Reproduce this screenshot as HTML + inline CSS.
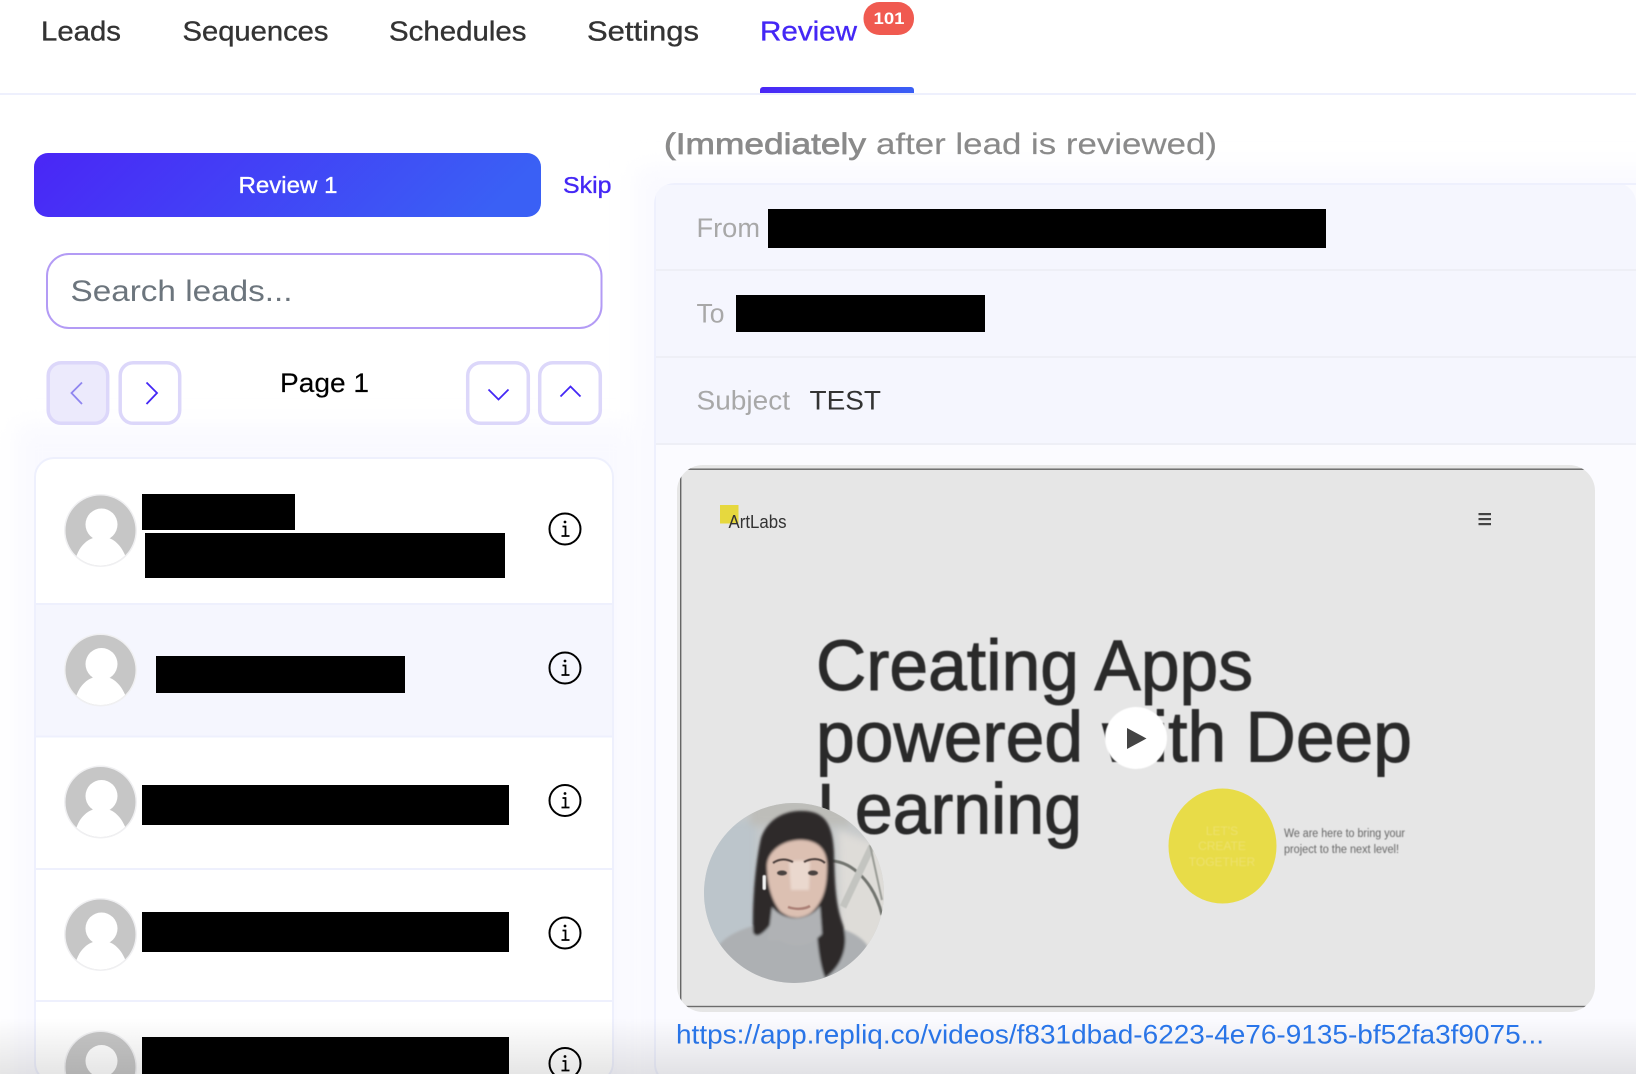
<!DOCTYPE html>
<html lang="en">
<head>
<meta charset="utf-8">
<title>Review</title>
<style>
html,body{margin:0;padding:0;background:#fff;width:1636px;height:1074px;overflow:hidden}
svg{display:block;overflow:hidden}
text{font-family:"Liberation Sans",sans-serif}
</style>
</head>
<body>
<svg width="1636" height="1074" viewBox="0 0 1636 1074" xmlns="http://www.w3.org/2000/svg">
<defs>
  <linearGradient id="grad" x1="0" y1="0" x2="1" y2="0.13"><stop offset="0" stop-color="#4a26f6"/><stop offset="1" stop-color="#3a60f5"/></linearGradient>
  <linearGradient id="grad2" x1="0" y1="0" x2="1" y2="0"><stop offset="0" stop-color="#4a26f6"/><stop offset="1" stop-color="#3a60f5"/></linearGradient>
  <linearGradient id="fade" x1="0" y1="0" x2="0" y2="1"><stop offset="0" stop-color="#000" stop-opacity="0"/><stop offset="1" stop-color="#000" stop-opacity="0.10"/></linearGradient>
  <clipPath id="avclip"><circle cx="0" cy="0" r="35"/></clipPath>
  <clipPath id="pclip"><circle cx="794" cy="893" r="90"/></clipPath>
  <clipPath id="vclip"><rect x="677" y="465" width="918" height="547" rx="26"/></clipPath>
  <clipPath id="pageclip"><rect x="654" y="183" width="982" height="891" rx="20"/></clipPath>
  <clipPath id="frame"><rect x="0" y="0" width="1636" height="1074"/></clipPath>
  <filter id="b1" x="-20%" y="-20%" width="140%" height="140%"><feGaussianBlur stdDeviation="0.6"/></filter>
  <filter id="b2" x="-20%" y="-20%" width="140%" height="140%"><feGaussianBlur stdDeviation="1.300"/></filter>
  <filter id="b3" x="-20%" y="-20%" width="140%" height="140%"><feGaussianBlur stdDeviation="4"/></filter>
  <filter id="glow" x="-10%" y="-10%" width="120%" height="120%"><feGaussianBlur stdDeviation="12"/></filter>
  <g id="av">
    <circle r="36.5" fill="#f0f0f2"/>
    <circle r="35" fill="#c6c6c6"/>
    <g clip-path="url(#avclip)">
      <path d="M-24.500 27C-21 15-12 7-2 6.500L3 6.500C13 7 21 15 25.500 27L25.500 40L-24.500 40Z" fill="#fff"/>
    </g>
    <circle cx="1" cy="-6" r="16" fill="#fff"/>
  </g>
  <g id="inf" fill="none" stroke="#000">
    <circle r="15.500" stroke-width="2"/>
    <circle cx="0" cy="-7" r="1.400" fill="#000" stroke="none"/>
    <path d="M-2.500-2.500H0.500V7M-3.500 7H4.500" stroke-width="1.800"/>
  </g>
</defs>

<rect width="1636" height="1074" fill="#fff"/>
<g clip-path="url(#frame)">
  <rect x="16" y="425" width="620" height="760" fill="#f9f9ff" filter="url(#glow)"/>
  <rect x="636" y="168" width="1100" height="1000" fill="#f9f9ff" filter="url(#glow)"/>
</g>

<!-- nav -->
<g font-size="28" fill="#333" stroke="#333" stroke-width="0.350">
  <text x="41" y="40.500" textLength="80" lengthAdjust="spacingAndGlyphs">Leads</text>
  <text x="182.500" y="40.500" textLength="146" lengthAdjust="spacingAndGlyphs">Sequences</text>
  <text x="389" y="40.500" textLength="137.500" lengthAdjust="spacingAndGlyphs">Schedules</text>
  <text x="587" y="40.500" textLength="112" lengthAdjust="spacingAndGlyphs">Settings</text>
  <text x="760" y="40.500" textLength="97" lengthAdjust="spacingAndGlyphs" fill="#4427f5" stroke="#4427f5">Review</text>
</g>
<rect x="863.500" y="2" width="50.500" height="33" rx="16" fill="#f05a50"/>
<text x="889" y="24" font-size="17" font-weight="700" fill="#fff" text-anchor="middle" textLength="31" lengthAdjust="spacingAndGlyphs">101</text>
<path d="M760 93V90a3 3 0 0 1 3-3H911a3 3 0 0 1 3 3V93Z" fill="url(#grad2)"/>
<rect x="0" y="93" width="1636" height="2" fill="#eef0fd"/>

<!-- review button -->
<rect x="34" y="153" width="507" height="64" rx="14" fill="url(#grad)"/>
<text x="238.500" y="193" font-size="23" fill="#fff" stroke="#fff" stroke-width="0.350" textLength="99" lengthAdjust="spacingAndGlyphs">Review 1</text>
<text x="563" y="193" font-size="23" fill="#4427f5" stroke="#4427f5" stroke-width="0.350" textLength="48.500" lengthAdjust="spacingAndGlyphs">Skip</text>

<!-- search -->
<rect x="47" y="254" width="554.500" height="74" rx="22" fill="#fff" stroke="#b39bf5" stroke-width="2"/>
<text x="70.500" y="301" font-size="30" fill="#6c757d" textLength="222" lengthAdjust="spacingAndGlyphs">Search leads...</text>

<!-- pager -->
<g stroke="#dcd7fa" stroke-width="3.500" fill="#fff">
  <rect x="48.200" y="362.700" width="59.500" height="60.600" rx="13" fill="#eceafc"/>
  <rect x="120.200" y="362.700" width="59.500" height="60.600" rx="13"/>
  <rect x="467.700" y="362.700" width="60.600" height="60.600" rx="13"/>
  <rect x="539.700" y="362.700" width="60.600" height="60.600" rx="13"/>
</g>
<g fill="none" stroke-width="1.800">
  <path d="M82 382.500L71.500 393L82 404" stroke="#8f86f0"/>
  <path d="M146.500 382.500L157 393L146.500 404" stroke="#4427f5"/>
  <path d="M488.500 389.500L498.500 399.500L508.500 389.500" stroke="#4427f5"/>
  <path d="M560.500 396.500L570.500 386.500L580.500 396.500" stroke="#4427f5"/>
</g>
<text x="280" y="392" font-size="27" fill="#000" stroke="#000" stroke-width="0.150" textLength="89" lengthAdjust="spacingAndGlyphs">Page 1</text>

<!-- list -->
<rect x="35" y="458" width="578" height="624" rx="19" fill="#fff" stroke="#eef0fd" stroke-width="2"/>
<rect x="36" y="604.500" width="576" height="131" fill="#f5f6fe"/>
<g fill="#eef0fd">
  <rect x="36" y="603" width="576" height="2"/>
  <rect x="36" y="735.500" width="576" height="2"/>
  <rect x="36" y="868" width="576" height="2"/>
  <rect x="36" y="1000" width="576" height="2"/>
</g>
<use href="#av" x="100.500" y="530.500"/>
<use href="#av" x="100.500" y="670"/>
<use href="#av" x="100.500" y="802"/>
<use href="#av" x="100.500" y="934.500"/>
<g clip-path="url(#frame)"><use href="#av" x="100.500" y="1067"/></g>
<g fill="#000">
  <rect x="142" y="494" width="153" height="36"/>
  <rect x="145" y="533" width="360" height="45"/>
  <rect x="156" y="656" width="249" height="37"/>
  <rect x="142" y="785" width="367" height="40"/>
  <rect x="142" y="912" width="367" height="40"/>
  <rect x="142" y="1037" width="367" height="37"/>
</g>
<use href="#inf" x="565" y="529"/>
<use href="#inf" x="565" y="668"/>
<use href="#inf" x="565" y="800.500"/>
<use href="#inf" x="565" y="933"/>
<g clip-path="url(#frame)"><use href="#inf" x="565" y="1063.500"/></g>

<!-- right heading -->
<text x="664" y="154" font-size="30" fill="#8a8a8a" stroke="#8a8a8a" stroke-width="0.700" textLength="202" lengthAdjust="spacingAndGlyphs">(Immediately</text>
<text x="876" y="154" font-size="30" fill="#8a8a8a" stroke="#8a8a8a" stroke-width="0.150" textLength="341" lengthAdjust="spacingAndGlyphs">after lead is reviewed)</text>

<!-- email panel -->
<g clip-path="url(#frame)">
  <rect x="655" y="184" width="1000" height="900" rx="20" fill="#fbfbff" stroke="#eef0fd" stroke-width="2"/>
</g>
<g clip-path="url(#pageclip)">
  <rect x="656" y="185" width="980" height="259" fill="#f5f6fe"/>
  <rect x="656" y="269" width="980" height="2" fill="#eeeff6"/>
  <rect x="656" y="356" width="980" height="2" fill="#eeeff6"/>
  <rect x="656" y="443" width="980" height="2" fill="#eeeff6"/>
</g>
<g font-size="27" fill="#a8a8a8">
  <text x="696.500" y="237" textLength="63.500" lengthAdjust="spacingAndGlyphs">From</text>
  <text x="696.500" y="322.500" textLength="28" lengthAdjust="spacingAndGlyphs">To</text>
  <text x="696.500" y="409.500" textLength="93.500" lengthAdjust="spacingAndGlyphs">Subject</text>
  <text x="809.500" y="409.500" fill="#333" textLength="71.500" lengthAdjust="spacingAndGlyphs">TEST</text>
</g>
<rect x="768" y="209" width="558" height="39" fill="#000"/>
<rect x="736" y="295" width="249" height="37" fill="#000"/>

<!-- video -->
<g clip-path="url(#vclip)">
  <rect x="677" y="465" width="918" height="547" fill="#e6e6e6"/>
  <rect x="680" y="468.500" width="920" height="1.400" fill="#666"/>
  <rect x="680" y="468.500" width="1.400" height="540" fill="#666"/>
  <rect x="680" y="1005.800" width="920" height="1.400" fill="#6c6c6c"/>
  <rect x="720" y="505" width="18.500" height="18.500" fill="#e6d83e"/>
  <text x="728.500" y="528" font-size="18" fill="#333" textLength="58" lengthAdjust="spacingAndGlyphs">ArtLabs</text>
  <g fill="#444">
    <rect x="1478.500" y="513" width="12.500" height="2.200"/>
    <rect x="1478.500" y="518" width="12.500" height="2.200"/>
    <rect x="1478.500" y="523" width="12.500" height="2.200"/>
  </g>
  <g font-size="71" fill="#2a2a2c" stroke="#2a2a2c" stroke-width="1" filter="url(#b1)">
    <text x="816" y="690" textLength="437" lengthAdjust="spacingAndGlyphs">Creating Apps</text>
    <text x="816" y="761.500" textLength="596" lengthAdjust="spacingAndGlyphs">powered with Deep</text>
    <text x="817" y="833.500" textLength="265" lengthAdjust="spacingAndGlyphs">Learning</text>
  </g>
  <ellipse cx="1222.500" cy="846" rx="54" ry="57.500" fill="#e8dc48"/>
  <g font-size="12" fill="#ede16c" text-anchor="middle" filter="url(#b1)">
    <text x="1222" y="835">LET'S</text>
    <text x="1222" y="850">CREATE</text>
    <text x="1222" y="866">TOGETHER</text>
  </g>
  <g font-size="11.500" fill="#666" filter="url(#b1)">
    <text x="1284" y="837" textLength="121" lengthAdjust="spacingAndGlyphs">We are here to bring your</text>
    <text x="1284" y="853" textLength="115" lengthAdjust="spacingAndGlyphs">project to the next level!</text>
  </g>
  <circle cx="1136" cy="738" r="31" fill="#fff" filter="url(#b1)"/>
  <path d="M1127 728V749L1146.500 738.500Z" fill="#444"/>

  <!-- person -->
  <g clip-path="url(#pclip)">
    <rect x="700" y="800" width="190" height="190" fill="#c6c9ca"/>
    <g filter="url(#b3)">
      <rect x="695" y="820" width="62" height="130" fill="#bcc5cb"/>
      <path d="M838 830L895 850V970H840Z" fill="#dedcd8"/>
      <path d="M750 795H850V826H750Z" fill="#bdbdb9"/>
    </g>
    <g filter="url(#b1)">
      <path d="M832 861C852 862 874 882 882 915" fill="none" stroke="#72756f" stroke-width="3"/>
      <path d="M843 907L872 846" stroke="#c3c4c0" stroke-width="7" fill="none"/>
      <path d="M870 845L882 900" stroke="#9a9c96" stroke-width="2" fill="none"/>
    </g>
    <g filter="url(#b2)">
      <!-- sweater -->
      <path d="M719 945C730 932 750 926 772 921L818 921C835 926 858 932 867 945L876 995H712Z" fill="#adb0b3"/>
      <path d="M772 905L818 905L824 940L768 940Z" fill="#b0b2b5"/>
      <!-- hair -->
      <path d="M753 932C752 900 756 860 761 838C769 815 792 808 812 812C829 816 833 832 834 852C835 890 836 905 843 925C850 948 840 968 825 978C819 962 818 945 816 925L770 925C765 932 756 940 753 932Z" fill="#2d292b"/>
      <!-- face -->
      <path d="M767 865C768 850 785 839 803 840C820 841 828 852 827 868C827 888 823 902 812 912C802 920 789 919 780 911C772 901 767 885 767 865Z" fill="#dcc0b2"/>
      <path d="M772 907C784 922 808 922 820 906L822 934C806 950 786 948 769 932Z" fill="#b0b2b5"/>
      <path d="M789 862C798 860 803 860 810 862L809 890L791 890Z" fill="#ead8ce"/>
    </g>
    <g filter="url(#b1)">
      <path d="M773 863C780 858 787 859 793 862" stroke="#4a3e3a" stroke-width="2" fill="none"/>
      <path d="M804 862C811 858 820 858 825 863" stroke="#4a3e3a" stroke-width="2" fill="none"/>
      <ellipse cx="782" cy="873" rx="5" ry="2.500" fill="#4a4240"/>
      <ellipse cx="813" cy="873" rx="5" ry="2.500" fill="#4a4240"/>
      <path d="M788 907C796 910 805 909 810 906" stroke="#ab8076" stroke-width="2.500" fill="none"/>
      <rect x="762.500" y="875" width="3.500" height="15" rx="1.700" fill="#f2f2f2"/>
    </g>
  </g>
</g>

<!-- link -->
<text x="676" y="1043.500" font-size="27" fill="#2a78ee" textLength="868" lengthAdjust="spacingAndGlyphs">https://app.repliq.co/videos/f831dbad-6223-4e76-9135-bf52fa3f9075...</text>

<rect x="0" y="1018" width="1636" height="56" fill="url(#fade)"/>
</svg>
</body>
</html>
